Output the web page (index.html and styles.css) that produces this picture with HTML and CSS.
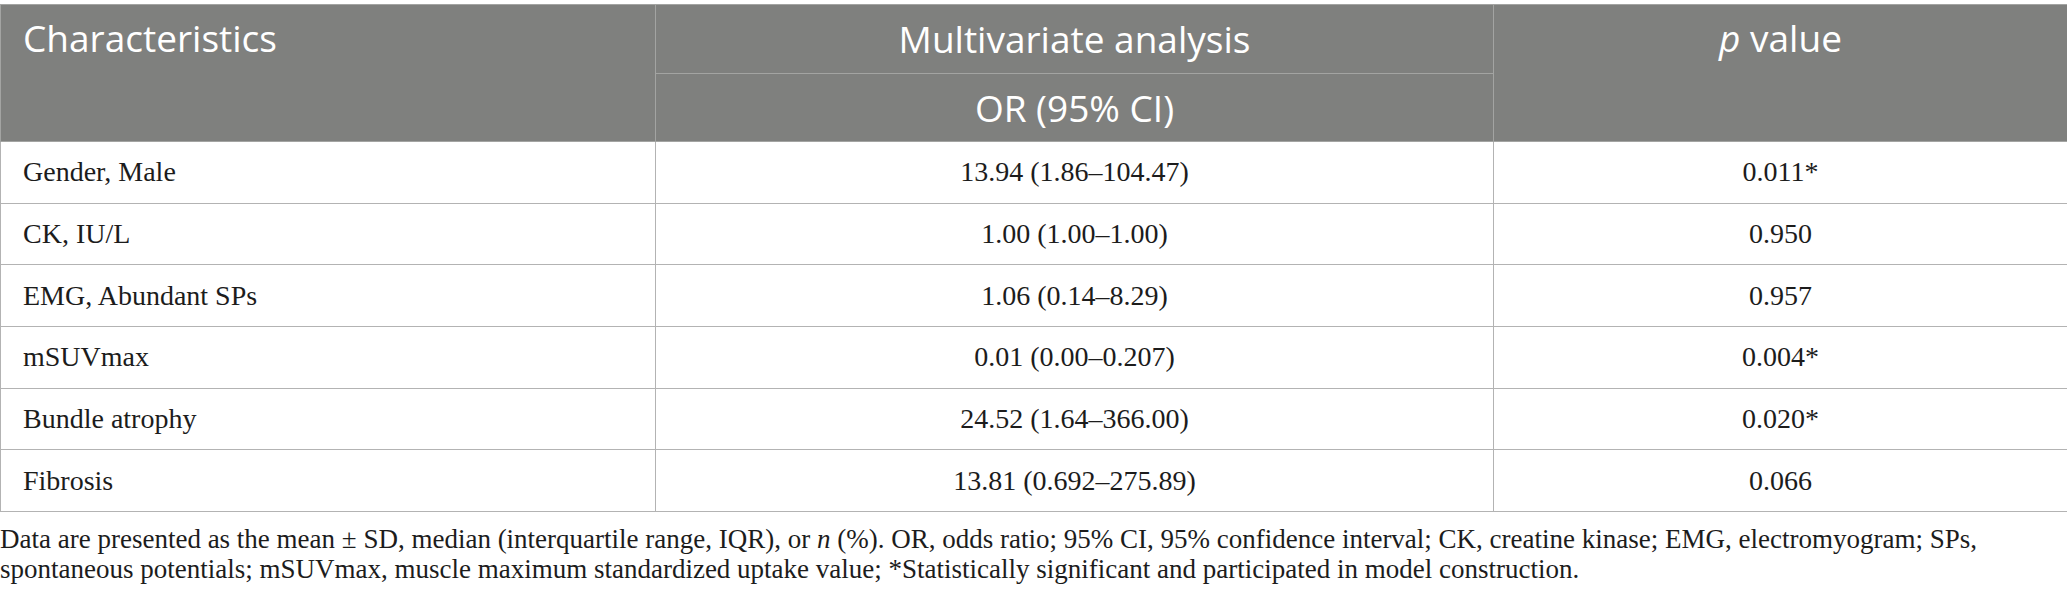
FILE: index.html
```html
<!DOCTYPE html>
<html lang="en">
<head>
<meta charset="utf-8">
<title>Multivariate analysis</title>
<link rel="stylesheet" href="styles.css">
</head>
<body>
<div class="page">
  <table class="data-table">
    <colgroup>
      <col class="col-char">
      <col class="col-or">
      <col class="col-p">
    </colgroup>
    <thead>
      <tr class="head-top">
        <th class="th-left" rowspan="2">Characteristics</th>
        <th class="th-center">Multivariate analysis</th>
        <th class="th-center th-top" rowspan="2"><i>p</i> value</th>
      </tr>
      <tr class="head-sub">
        <th class="th-center">OR (95% CI)</th>
      </tr>
    </thead>
    <tbody>
      <tr><td class="td-left">Gender, Male</td><td>13.94 (1.86–104.47)</td><td>0.011*</td></tr>
      <tr><td class="td-left">CK, IU/L</td><td>1.00 (1.00–1.00)</td><td>0.950</td></tr>
      <tr><td class="td-left">EMG, Abundant SPs</td><td>1.06 (0.14–8.29)</td><td>0.957</td></tr>
      <tr><td class="td-left">mSUVmax</td><td>0.01 (0.00–0.207)</td><td>0.004*</td></tr>
      <tr><td class="td-left">Bundle atrophy</td><td>24.52 (1.64–366.00)</td><td>0.020*</td></tr>
      <tr><td class="td-left">Fibrosis</td><td>13.81 (0.692–275.89)</td><td>0.066</td></tr>
    </tbody>
  </table>
  <p class="footnote">Data are presented as the mean ± SD, median (interquartile range, IQR), or <i>n</i> (%). OR, odds ratio; 95% CI, 95% confidence interval; CK, creatine kinase; EMG, electromyogram; SPs, spontaneous potentials; mSUVmax, muscle maximum standardized uptake value; *Statistically significant and participated in model construction.</p>
</div>
</body>
</html>
```

FILE: styles.css
```css
html, body {
  margin: 0;
  padding: 0;
  background: #ffffff;
}

.page {
  padding-top: 4px;
  width: 2067px;
}

.data-table {
  width: 2067px;
  border-collapse: collapse;
  table-layout: fixed;
}

.col-char { width: 655px; }
.col-or { width: 838px; }
.col-p { width: 574px; }

.data-table th {
  background: #7f807e;
  color: #ffffff;
  font-family: "Open Sans", "Liberation Sans", sans-serif;
  font-weight: 400;
  font-size: 37px;
  line-height: 44px;
  border: 1px solid #a3a4a2;
  padding: 0 22px;
}

.head-top th { height: 68px; }
.head-sub th { height: 67px; }

.th-left {
  text-align: left;
  vertical-align: top;
  padding-top: 11px !important;
}

.th-center {
  text-align: center;
  vertical-align: middle;
}

.th-top {
  vertical-align: top;
  padding-top: 11px !important;
}

.data-table td {
  font-family: "Liberation Serif", "Times New Roman", serif;
  font-size: 28px;
  color: #1c1c1c;
  border: 1px solid #b3b3b3;
  height: 60.7px;
  padding: 0 22px;
  text-align: center;
  vertical-align: middle;
}

.data-table td.td-left {
  text-align: left;
}

.footnote {
  margin: 12px 0 0 0;
  font-family: "Liberation Serif", "Times New Roman", serif;
  font-size: 27px;
  line-height: 30px;
  color: #1c1c1c;
}
```
